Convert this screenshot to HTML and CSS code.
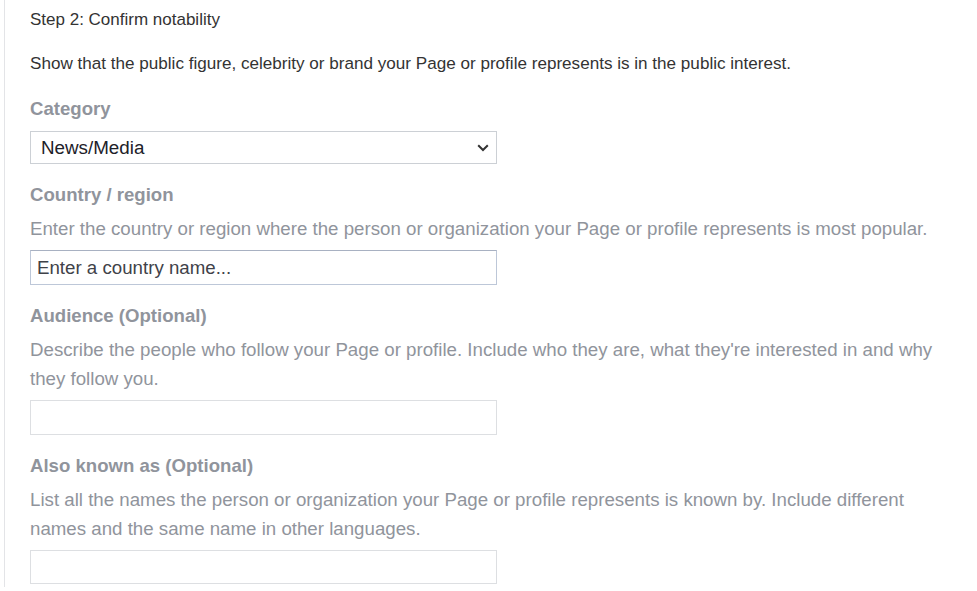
FILE: index.html
```html
<!DOCTYPE html>
<html>
<head>
<meta charset="utf-8">
<link rel="stylesheet" href="styles.css">
</head>
<body>
<div class="panel">
  <div class="step">Step 2: Confirm notability</div>
  <div class="intro">Show that the public figure, celebrity or brand your Page or profile represents is in the public interest.</div>

  <div class="field first">
    <div class="label">Category</div>
    <div class="select">
      <span>News/Media</span>
      <svg class="chev" width="12" height="8" viewBox="0 0 12 8"><path d="M1.2 1.2 L6 6 L10.8 1.2" fill="none" stroke="#333" stroke-width="2"/></svg>
    </div>
  </div>

  <div class="field">
    <div class="label">Country / region</div>
    <div class="help">Enter the country or region where the person or organization your Page or profile represents is most popular.</div>
    <div class="input dark"><span class="ph">Enter a country name...</span></div>
  </div>

  <div class="field">
    <div class="label">Audience (Optional)</div>
    <div class="help">Describe the people who follow your Page or profile. Include who they are, what they're interested in and why they follow you.</div>
    <div class="input"></div>
  </div>

  <div class="field">
    <div class="label">Also known as (Optional)</div>
    <div class="help">List all the names the person or organization your Page or profile represents is known by. Include different names and the same name in other languages.</div>
    <div class="input last"></div>
  </div>
</div>
</body>
</html>
```

FILE: styles.css
```css
html, body {
  margin: 0;
  padding: 0;
  background: #fff;
}
body {
  font-family: "Liberation Sans", Arial, sans-serif;
  width: 977px;
  height: 591px;
  overflow: hidden;
}
.panel {
  margin-left: 4px;
  border-left: 1px solid #e3e4e7;
  padding: 10px 0 3px 25px;
  width: 920px;
}
.step {
  font-size: 17px;
  line-height: 20px;
  color: #333;
}
.intro {
  font-size: 17.1px;
  line-height: 20px;
  color: #333;
  margin-top: 24px;
}
.field {
  margin-top: 19px;
}
.field.first {
  margin-top: 23px;
}
.label {
  font-size: 18.6px;
  font-weight: bold;
  color: #90949c;
  line-height: 24px;
}
.help {
  font-size: 18.7px;
  color: #90949c;
  line-height: 29px;
  margin-top: 7px;
}
.select {
  margin-top: 10px;
  width: 467px;
  height: 33px;
  box-sizing: border-box;
  border: 1px solid #ccd0d5;
  display: flex;
  align-items: center;
  justify-content: space-between;
  padding: 0 7px 0 10px;
  font-size: 18.8px;
  color: #1d2129;
}
.chev {
  display: block;
}
.input {
  margin-top: 7px;
  width: 467px;
  height: 35px;
  box-sizing: border-box;
  border: 1px solid #dddfe2;
  display: flex;
  align-items: center;
  padding-left: 6px;
}
.input.last {
  height: 34px;
}
.input.dark {
  border-color: #bdc7d8;
  border-top-color: #a8b1c2;
}
.ph {
  font-size: 18.7px;
  color: #3f4249;
}
```
